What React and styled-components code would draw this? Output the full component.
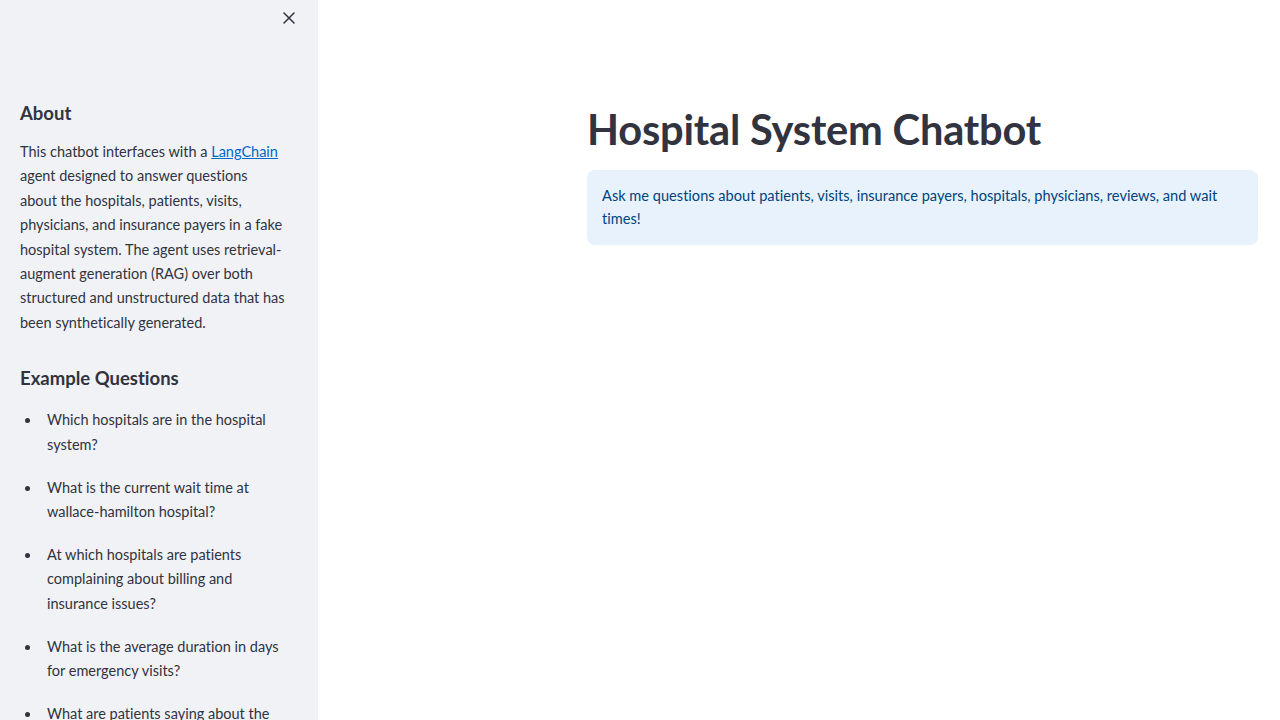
import React from 'react';
import styled, { createGlobalStyle } from 'styled-components';

const GlobalStyle = createGlobalStyle`
  html, body {
    margin: 0;
    padding: 0;
    background: #ffffff;
    font-family: Lato, "Noto Sans", sans-serif;
    font-variant-ligatures: no-common-ligatures;
    color: #31333f;
  }
`;

const Page = styled.div`
  display: flex;
  width: 1280px;
  height: 720px;
  overflow: hidden;
`;

const Sidebar = styled.aside`
  flex: 0 0 318px;
  background: #f0f2f6;
  display: flex;
  flex-direction: column;
  overflow: hidden;

  & > * {
    flex-shrink: 0;
  }
`;

const SidebarTop = styled.div`
  display: flex;
  justify-content: flex-end;
  padding: 10px 21px 0 0;
  height: 101px;
  box-sizing: border-box;
`;

const CloseButton = styled.button`
  border: none;
  background: transparent;
  padding: 0;
  width: 16px;
  height: 16px;
  display: flex;
  align-items: center;
  justify-content: center;
  color: #31333f;
  cursor: pointer;
`;

const SidebarBody = styled.div`
  padding: 0 31px 0 20px;
`;

const SideHeading = styled.h3`
  margin: ${p => p.$top || 0}px 0 0;
  font-size: 18.5px;
  font-weight: 700;
  line-height: 24px;
  color: #31333f;
`;

const Para = styled.p`
  margin: 15px 0 0;
  font-size: 14.5px;
  line-height: 24.4px;
`;

const Link = styled.a`
  color: #0068c9;
  text-decoration: underline;
`;

const List = styled.ul`
  list-style: none;
  margin: 18px 0 0;
  padding: 0;
  display: flex;
  flex-direction: column;
  gap: 18.6px;
`;

const Item = styled.li`
  display: grid;
  grid-template-columns: 27px 1fr;
  font-size: 14.5px;
  line-height: 24.4px;
`;

const Dot = styled.span`
  width: 5px;
  height: 5px;
  border-radius: 50%;
  background: #31333f;
  margin: 10px 0 0 5px;
`;

const Main = styled.main`
  flex: 1;
  padding: 103px 22px 0 269px;
`;

const Title = styled.h1`
  margin: 0;
  font-size: 41.6px;
  font-weight: 700;
  line-height: 53px;
  color: #31333f;
  letter-spacing: -0.2px;
`;

const InfoBox = styled.div`
  margin-top: 14px;
  background: #e8f2fc;
  color: #004280;
  border-radius: 8px;
  padding: 14px 16px 15px 15px;
  font-size: 14.6px;
  line-height: 23px;
`;

const questions = [
  'Which hospitals are in the hospital system?',
  'What is the current wait time at wallace-hamilton hospital?',
  'At which hospitals are patients complaining about billing and insurance issues?',
  'What is the average duration in days for emergency visits?',
  'What are patients saying about the nursing staff at Castaneda-Hardy?',
];

export default function App() {
  return (
    <Page>
      <GlobalStyle />
      <Sidebar>
        <SidebarTop>
          <CloseButton aria-label="Close sidebar">
            <svg width="12" height="12" viewBox="0 0 12 12" fill="none" stroke="currentColor" strokeWidth="1.5" strokeLinecap="round">
              <path d="M1 1L11 11M11 1L1 11" />
            </svg>
          </CloseButton>
        </SidebarTop>
        <SidebarBody>
          <SideHeading>About</SideHeading>
          <Para>
            This chatbot interfaces with a <Link href="#">LangChain</Link> agent designed to answer
            questions about the hospitals, patients, visits, physicians, and insurance payers in a fake
            hospital system. The agent uses retrieval-augment generation (RAG) over both structured and
            unstructured data that has been synthetically generated.
          </Para>
          <SideHeading $top={31}>Example Questions</SideHeading>
          <List>
            {questions.map(q => (
              <Item key={q}>
                <Dot />
                <span>{q}</span>
              </Item>
            ))}
          </List>
        </SidebarBody>
      </Sidebar>
      <Main>
        <Title>Hospital System Chatbot</Title>
        <InfoBox>
          Ask me questions about patients, visits, insurance payers, hospitals, physicians, reviews, and wait times!
        </InfoBox>
      </Main>
    </Page>
  );
}
